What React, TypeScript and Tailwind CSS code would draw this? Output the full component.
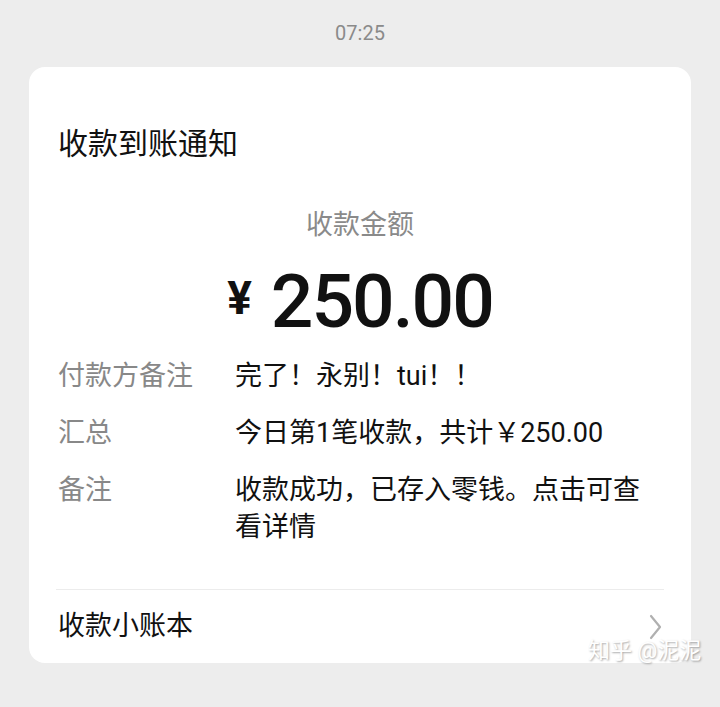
const font = "font-['Roboto','Noto_Sans_CJK_SC',sans-serif]";

function Row({ label, children }: { label: string; children: React.ReactNode }) {
  return (
    <div className="flex">
      <div className="w-[177px] shrink-0 text-[#888888]">{label}</div>
      <div className="flex-1 text-[#111111]">{children}</div>
    </div>
  );
}

export default function App() {
  return (
    <div className={`w-[720px] h-[707px] overflow-hidden bg-[#ededed] ${font} relative`}>
      <div className="h-[67px] flex items-center justify-center text-[20px] text-[#8a8a8a] pb-[1px]">
        07:25
      </div>

      <div className="mx-[29px] w-[662px] h-[596px] bg-white rounded-[16px] flex flex-col">
        <div className="px-[29px] pt-[58px] text-[30px] leading-[38px] text-[#111111]">收款到账通知</div>

        <div className="mt-[42px] text-center text-[27px] leading-[40px] text-[#8a8a8a]">收款金额</div>

        <div className="mt-[16px] flex items-center justify-center h-[80px] text-[#111111]">
          <span className="text-[46px] font-bold mr-[19px] mb-[6px]">¥</span>
          <span className="text-[75px] font-medium tracking-[-2px]">250.00</span>
        </div>

        <div className="mt-[17px] px-[29px] flex flex-col gap-[20px] text-[27px] leading-[37px]">
          <Row label="付款方备注">完了！永别！tui！！</Row>
          <Row label="汇总">今日第1笔收款，共计￥250.00</Row>
          <Row label="备注">收款成功，已存入零钱。点击可查看详情</Row>
        </div>

        <div className="mt-[43px] mx-[27px] h-[1px] bg-[#ececec]" />

        <div className="flex-1 px-[29px] flex items-center justify-between">
          <span className="text-[27px] text-[#111111]">收款小账本</span>
          <svg width="14" height="26" viewBox="0 0 14 26" className="mr-[-1px]">
            <path d="M2 2 L11 13 L2 24" fill="none" stroke="#b0b0b0" strokeWidth="2.2" strokeLinecap="round" strokeLinejoin="round" />
          </svg>
        </div>
      </div>

      <div className="absolute left-[588px] top-[634px] text-[22px] text-white [text-shadow:1px_1px_2px_rgba(0,0,0,0.35)]">
        知乎 @泥泥
      </div>
    </div>
  );
}
